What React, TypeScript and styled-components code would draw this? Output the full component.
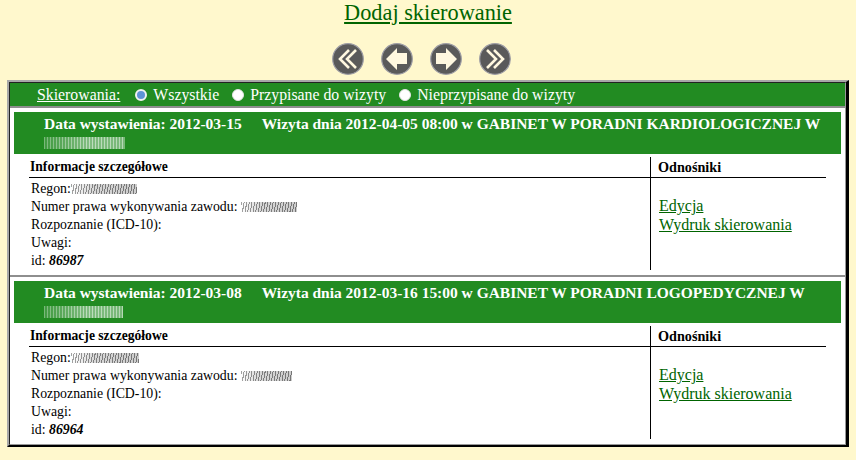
import React from 'react';
import styled, { createGlobalStyle } from 'styled-components';

const Global = createGlobalStyle`
  html, body { margin: 0; padding: 0; background: #fff8cd; }
  body { font-family: "Liberation Serif", "Times New Roman", serif; color: #000; overflow: hidden; }
  * { box-sizing: border-box; }
`;

const Page = styled.div`
  width: 856px;
  height: 460px;
  display: flex;
  flex-direction: column;
  align-items: center;
`;

const Title = styled.a`
  font-size: 22.3px;
  line-height: 25px;
  color: #006400;
  text-decoration: underline;
  margin-bottom: 18px;
`;

const Nav = styled.div`
  display: flex;
  gap: 17px;
  height: 37px;
  margin-right: 13px;
`;

const Outer = styled.div`
  width: 842px;
  border-style: solid;
  border-width: 2px 3px 2px 2px;
  border-color: #a8a8a8 #000 #000 #a8a8a8;
  background: #fff;
`;

const Inner = styled.div`
  border-style: solid;
  border-width: 1px;
  border-color: #222 #999 #999 #222;
`;

const FilterBar = styled.div`
  height: 23px;
  background: #228b22;
  color: #fff;
  display: flex;
  align-items: center;
  padding-left: 27px;
  font-size: 15.8px;
`;

const FilterLabel = styled.span`
  text-decoration: underline;
  margin-right: 15px;
`;

const Radio = styled.span<{ $on?: boolean }>`
  width: 12px;
  height: 12px;
  border-radius: 50%;
  background: ${p => (p.$on ? '#5f93d6' : '#fff')};
  border: ${p => (p.$on ? '2.5px solid #f2f2f2' : '1px solid #e4e4e4')};
  margin-right: 6px;
`;

const Option = styled.span`
  margin-right: 13px;
`;

const Card = styled.section`
  border-top: 2px solid #8e8e8e;
  padding: 4px 4px 5px;
`;

const CardHead = styled.div`
  background: #228b22;
  color: #fff;
  font-weight: bold;
  font-size: 15.47px;
  line-height: 21px;
  padding: 1px 10px 0 30px;
  height: 42px;
`;

const HeadGap = styled.span`
  display: inline-block;
  width: 20px;
`;

const Smudge = styled.span<{ $w: number; $dark?: boolean }>`
  display: inline-block;
  height: ${p => (p.$dark ? 10 : 12)}px;
  width: ${p => p.$w}px;
  vertical-align: ${p => (p.$dark ? -1 : 1)}px;
  filter: blur(0.5px);
  background: ${p =>
    p.$dark
      ? 'repeating-linear-gradient(100deg, rgba(70,70,70,.5) 0 1px, rgba(255,255,255,.45) 1px 2.6px), linear-gradient(90deg, #fff, #b8b8b8 35%, #a4a4a4)'
      : 'repeating-linear-gradient(90deg, rgba(255,255,255,.25) 0 1px, rgba(34,139,34,.3) 1px 3px), linear-gradient(90deg, #4da04d, #a9d2a9 55%, #9ccb9c)'};
`;

const Columns = styled.div`
  display: grid;
  grid-template-columns: 637px 1fr;
  margin-top: 3px;
`;

const InfoCol = styled.div`
  border-right: 1px solid #000;
  padding-left: 15px;
  height: 113px;
`;

const LinksCol = styled.div`
  padding-right: 15px;
`;

const ColHead = styled.div<{ $size: number; $indent: number }>`
  font-weight: bold;
  font-size: ${p => p.$size}px;
  line-height: 20px;
  height: 21px;
  border-bottom: 1px solid #000;
  padding-left: ${p => p.$indent}px;
`;

const Details = styled.div`
  font-size: 13.8px;
  line-height: 18px;
  padding: 2px 0 0 2px;
`;

const Links = styled.div`
  display: flex;
  flex-direction: column;
  align-items: flex-start;
  padding: 18px 0 0 8px;
  font-size: 16px;
  line-height: 19px;
`;

const LinkItem = styled.a`
  color: #006400;
  text-decoration: underline;
`;

function NavIcon({ kind }: { kind: 'first' | 'prev' | 'next' | 'last' }) {
  const flip = kind === 'first' || kind === 'prev';
  const double = kind === 'first' || kind === 'last';
  return (
    <svg width="32" height="32" viewBox="0 0 32 32">
      <circle cx="16" cy="16" r="15.3" fill="#5a5a5a" stroke="#9c9ca4" strokeWidth="1.2" />
      <g transform={flip ? 'matrix(-1 0 0 1 32 0)' : undefined}>
        {double ? (
          <path d="M8 7l9 9-9 9M15 7l9 9-9 9" fill="none" stroke="#fff8e0" strokeWidth="2.6" />
        ) : (
          <path d="M6 10h10V5l11 11-11 11v-6H6z" fill="#fff8e0" />
        )}
      </g>
    </svg>
  );
}

type Ref = {
  issued: string;
  visit: string;
  clinic: string;
  id: string;
  headW: number;
  regonW: number;
  numW: number;
};

const items: Ref[] = [
  { issued: '2012-03-15', visit: '2012-04-05 08:00', clinic: 'KARDIOLOGICZNEJ', id: '86987', headW: 81, regonW: 66, numW: 56 },
  { issued: '2012-03-08', visit: '2012-03-16 15:00', clinic: 'LOGOPEDYCZNEJ', id: '86964', headW: 79, regonW: 68, numW: 51 },
];

export default function App() {
  return (
    <Page>
      <Global />
      <Title href="#">Dodaj skierowanie</Title>
      <Nav>
        <NavIcon kind="first" />
        <NavIcon kind="prev" />
        <NavIcon kind="next" />
        <NavIcon kind="last" />
      </Nav>
      <Outer>
        <Inner>
          <FilterBar>
            <FilterLabel>Skierowania:</FilterLabel>
            <Radio $on />
            <Option>Wszystkie</Option>
            <Radio />
            <Option>Przypisane do wizyty</Option>
            <Radio />
            <Option>Nieprzypisane do wizyty</Option>
          </FilterBar>
          {items.map(r => (
            <Card key={r.id}>
              <CardHead>
                Data wystawienia: {r.issued}
                <HeadGap />
                Wizyta dnia {r.visit} w GABINET W PORADNI {r.clinic} W
                <br />
                <Smudge $w={r.headW} />
              </CardHead>
              <Columns>
                <InfoCol>
                  <ColHead $size={13.6} $indent={1}>Informacje szczegółowe</ColHead>
                  <Details>
                    Regon:<Smudge $dark $w={r.regonW} />
                    <br />
                    Numer prawa wykonywania zawodu: <Smudge $dark $w={r.numW} />
                    <br />
                    Rozpoznanie (ICD-10):
                    <br />
                    Uwagi:
                    <br />
                    id: <b><i>{r.id}</i></b>
                  </Details>
                </InfoCol>
                <LinksCol>
                  <ColHead $size={14.2} $indent={7}>Odnośniki</ColHead>
                  <Links>
                    <LinkItem href="#">Edycja</LinkItem>
                    <LinkItem href="#">Wydruk skierowania</LinkItem>
                  </Links>
                </LinksCol>
              </Columns>
            </Card>
          ))}
        </Inner>
      </Outer>
    </Page>
  );
}
